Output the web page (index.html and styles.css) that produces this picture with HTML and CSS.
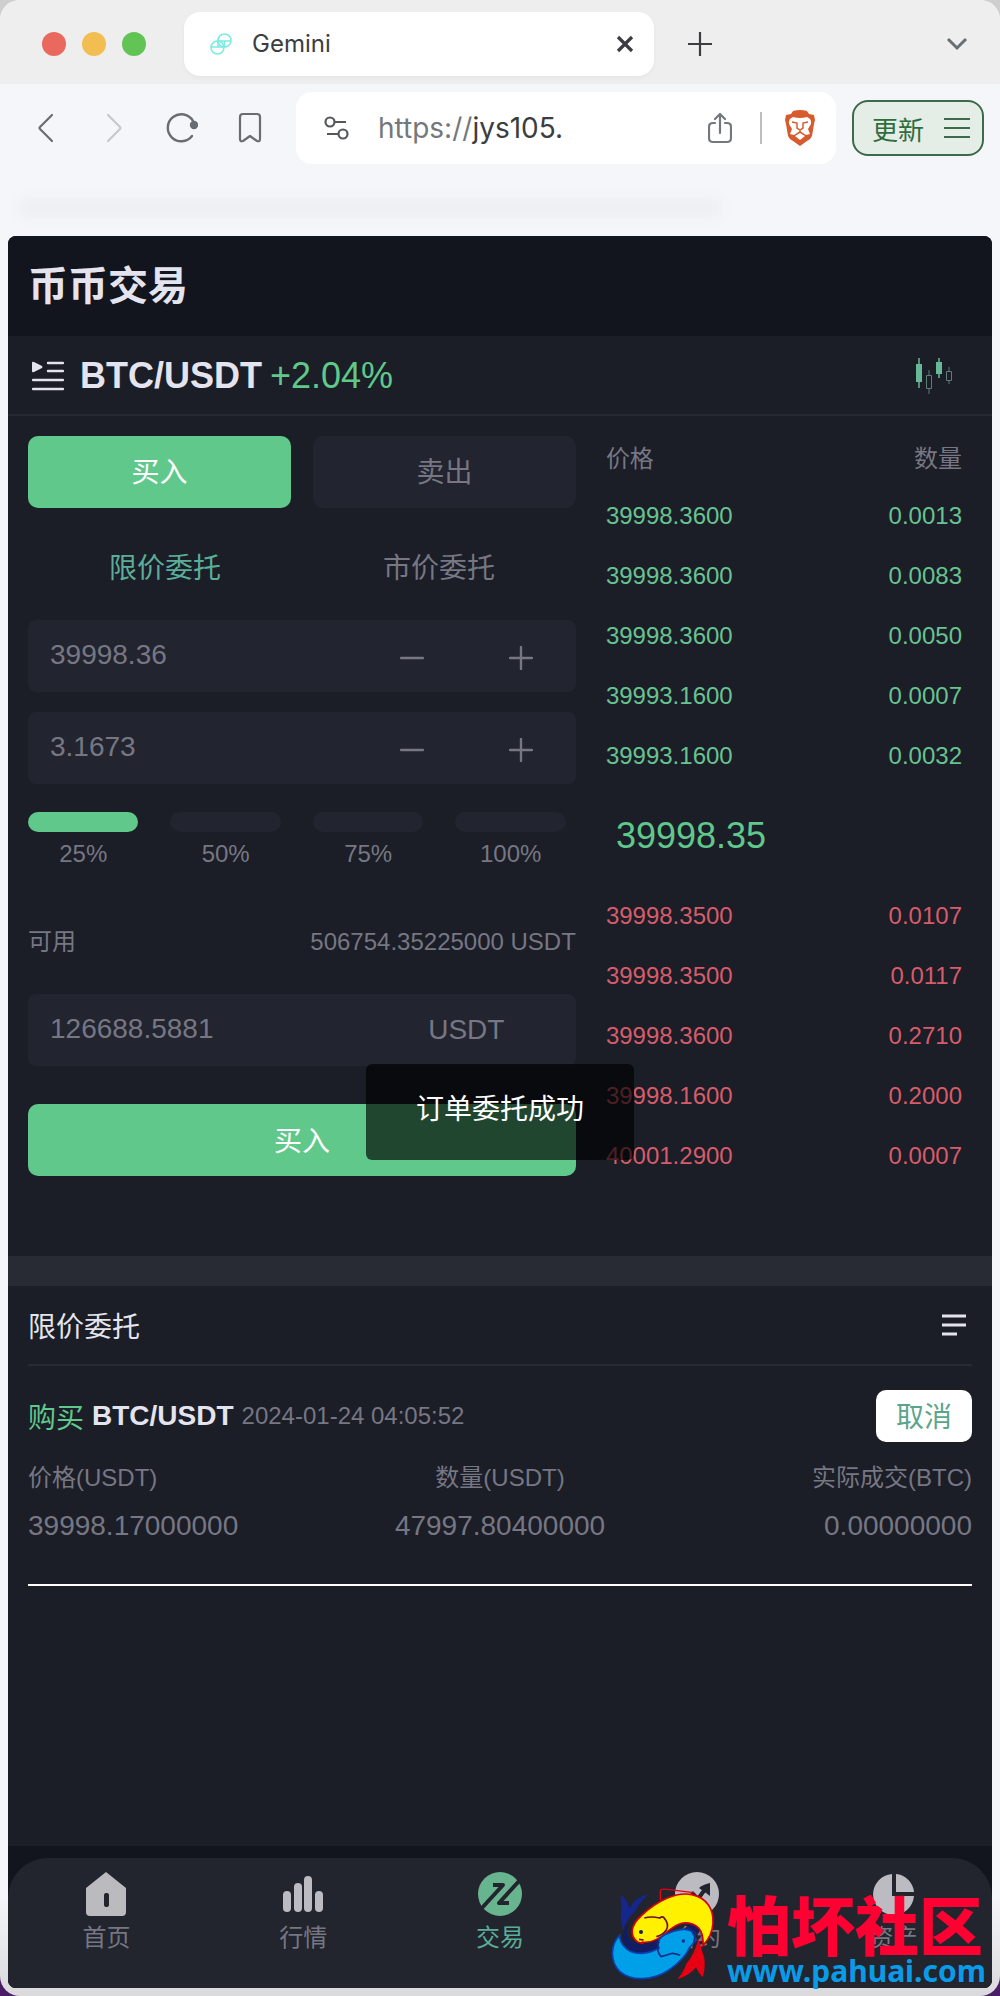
FILE: index.html
```html
<!DOCTYPE html>
<html lang="zh-CN">
<head>
<meta charset="utf-8">
<meta name="viewport" content="width=device-width, initial-scale=1">
<title>Gemini</title>
<link rel="stylesheet" href="styles.css">
</head>
<body>
<div class="window">
  <header class="tabbar">
    <div class="lights"><span class="light red"></span><span class="light yellow"></span><span class="light green"></span></div>
    <div class="tab">
      <svg class="favicon" viewBox="0 0 22 22" width="22" height="22" fill="none" stroke="#7cecdf" stroke-width="1.6"><circle cx="14.500" cy="7.500" r="6.500"/><circle cx="7.500" cy="14.500" r="6.500"/><path d="M1 14h13.500V8M21 8H8v6"/></svg>
      <span class="tab-title">Gemini</span>
      <button class="icon-btn" type="button" aria-label="关闭标签页"><svg viewBox="0 0 18 18" width="18" height="18" fill="none" stroke="#3b3d40" stroke-width="3.200"><path d="M2 2l14 14M16 2L2 16"/></svg></button>
    </div>
    <button class="icon-btn new-tab" type="button" aria-label="新标签页"><svg viewBox="0 0 24 24" width="24" height="24" fill="none" stroke="#3b3d40" stroke-width="2.200"><path d="M12 0v24M0 12h24"/></svg></button>
    <button class="icon-btn tab-list" type="button" aria-label="标签页列表"><svg viewBox="0 0 22 16" width="22" height="16" fill="none" stroke="#696e75" stroke-width="3"><path d="M2 3l9 9 9-9"/></svg></button>
  </header>

  <div class="toolbar">
    <div class="nav-buttons">
      <button class="icon-btn" type="button" aria-label="后退"><svg viewBox="0 0 32 32" width="32" height="32" fill="none" stroke="#696d72" stroke-width="2.200" stroke-linecap="round" stroke-linejoin="round"><path d="M22 3L10 15q-1 1 0 2l12 12"/></svg></button>
      <button class="icon-btn" type="button" aria-label="前进"><svg viewBox="0 0 32 32" width="32" height="32" fill="none" stroke="#c6c9cc" stroke-width="2.200" stroke-linecap="round" stroke-linejoin="round"><path d="M10 3l12 12q1 1 0 2L10 29"/></svg></button>
      <button class="icon-btn" type="button" aria-label="刷新"><svg viewBox="0 0 32 32" width="32" height="32" fill="none" stroke="#696d72" stroke-width="2.400" stroke-linecap="round"><path d="M27 9a13.500 13.500 0 1 0-1 15"/><circle cx="28" cy="13" r="3" fill="#696d72"/></svg></button>
      <button class="icon-btn" type="button" aria-label="书签"><svg viewBox="0 0 32 32" width="32" height="32" fill="none" stroke="#696d72" stroke-width="2.200" stroke-linejoin="round"><path d="M6 5q0-3 3-3h14q3 0 3 3v22q0 3-3 2l-7-5-7 5q-3 1-3-2z"/></svg></button>
    </div>
    <div class="address">
      <svg viewBox="0 0 26 24" width="26" height="24" fill="none" stroke="#55585c" stroke-width="2.200"><circle cx="6" cy="6" r="4.500"/><path d="M11 6h11M3 18h11"/><circle cx="19" cy="18" r="4.500"/></svg>
      <span class="url"><span class="scheme">https://</span>jys105.</span>
      <button class="icon-btn" type="button" aria-label="分享"><svg viewBox="0 0 24 32" width="24" height="32" fill="none" stroke="#74777b" stroke-width="2.200" stroke-linecap="round" stroke-linejoin="round"><path d="M7 11H5q-4 0-4 4v11q0 4 4 4h14q4 0 4-4V15q0-4-4-4h-2M12 21V2M7 7l5-5 5 5"/></svg></button>
      <span class="rule"></span>
      <button class="icon-btn" type="button" aria-label="防护"><svg viewBox="0 0 32 36" width="32" height="36"><path fill="#d85b2e" d="M9 1q7-2 14 0l2 3 5 1 1 5-1 4-2 12q-1 3-5 5l-7 5-7-5q-4-2-5-5L2 14l-1-4 1-5 5-1z"/><path fill="#fff" d="M9 7q7 2 14 0 5 2 4 7l-3 5 2 5-4 1-3-2-3-2-3 2-3 2-4-1 2-5-3-5q-1-5 4-7zM11 26l5-3 5 3-5 4z"/><path fill="none" stroke="#d85b2e" stroke-width="1.500" d="M8 12l5 1v5l3 2 3-2v-5l5-1M16 20v2"/></svg></button>
    </div>
    <button class="update" type="button">更新<svg viewBox="0 0 26 22" width="26" height="22" fill="none" stroke="#3c6b4a" stroke-width="2"><path d="M0 2h26M0 11h26M0 20h26"/></svg></button>
  </div>
  <div class="bookmarks" aria-hidden="true"><span class="smudge"></span></div>

  <main class="app">
    <h1 class="title">币币交易</h1>
    <div class="pair">
      <svg viewBox="0 0 32 30" width="32" height="30"><path fill="#e4e4ee" d="M0 2q0-2 2-1l8 4q1 1 0 2l-8 4q-2 1-2-1z"/><path stroke="#e4e4ee" stroke-width="2.400" stroke-linecap="round" d="M16 2h15M16 10h15M1 19h30M1 28h30"/></svg>
      <h2 class="pair-name">BTC/USDT</h2>
      <span class="change">+2.04%</span>
      <button class="icon-btn chart" type="button" aria-label="K线图"><svg viewBox="0 0 36 36" width="36" height="36"><path stroke="#67b896" stroke-width="1.500" d="M3 0v30M23 0v20"/><path fill="#67b896" d="M0 6h6v18H0zM20 4h6v12h-6z"/><path fill="none" stroke="#5d7d78" d="M13 12v5M10.500 17.500h5v13h-5zM13 31v5M33 9v4M30.500 13.500h5v9h-5zM33 23v3"/></svg></button>
    </div>

    <div class="trade">
      <form class="order-form">
        <div class="sides">
          <button class="side active" type="button">买入</button>
          <button class="side" type="button">卖出</button>
        </div>
        <div class="types">
          <button class="type active" type="button">限价委托</button>
          <button class="type" type="button">市价委托</button>
        </div>
        <div class="field">
          <input type="text" value="39998.36" aria-label="价格">
          <button class="icon-btn step" type="button" aria-label="减少价格"><svg viewBox="0 0 24 24" width="24" height="24" stroke="#767783" stroke-width="2.400" stroke-linecap="round"><path d="M1 12h22"/></svg></button>
          <button class="icon-btn step" type="button" aria-label="增加价格"><svg viewBox="0 0 24 24" width="24" height="24" stroke="#767783" stroke-width="2.400" stroke-linecap="round"><path d="M1 12h22M12 1v22"/></svg></button>
        </div>
        <div class="field">
          <input type="text" value="3.1673" aria-label="数量">
          <button class="icon-btn step" type="button" aria-label="减少数量"><svg viewBox="0 0 24 24" width="24" height="24" stroke="#767783" stroke-width="2.400" stroke-linecap="round"><path d="M1 12h22"/></svg></button>
          <button class="icon-btn step" type="button" aria-label="增加数量"><svg viewBox="0 0 24 24" width="24" height="24" stroke="#767783" stroke-width="2.400" stroke-linecap="round"><path d="M1 12h22M12 1v22"/></svg></button>
        </div>
        <div class="percents">
          <button class="percent active" type="button"><span class="bar"></span>25%</button>
          <button class="percent" type="button"><span class="bar"></span>50%</button>
          <button class="percent" type="button"><span class="bar"></span>75%</button>
          <button class="percent" type="button"><span class="bar"></span>100%</button>
        </div>
        <div class="available"><span>可用</span><span>506754.35225000 USDT</span></div>
        <div class="field total">
          <input type="text" value="126688.5881" aria-label="总额">
          <span class="unit">USDT</span>
        </div>
        <button class="submit" type="button">买入</button>
      </form>

      <table class="book">
        <thead><tr><th>价格</th><th>数量</th></tr></thead>
        <tbody class="up">
          <tr><td>39998.3600</td><td>0.0013</td></tr>
          <tr><td>39998.3600</td><td>0.0083</td></tr>
          <tr><td>39998.3600</td><td>0.0050</td></tr>
          <tr><td>39993.1600</td><td>0.0007</td></tr>
          <tr><td>39993.1600</td><td>0.0032</td></tr>
        </tbody>
        <tbody class="last"><tr><td colspan="2">39998.35</td></tr></tbody>
        <tbody class="down">
          <tr><td>39998.3500</td><td>0.0107</td></tr>
          <tr><td>39998.3500</td><td>0.0117</td></tr>
          <tr><td>39998.3600</td><td>0.2710</td></tr>
          <tr><td>39998.1600</td><td>0.2000</td></tr>
          <tr><td>40001.2900</td><td>0.0007</td></tr>
        </tbody>
      </table>
      <div class="toast" role="status">订单委托成功</div>
    </div>

    <section class="orders">
      <div class="orders-head">
        <h3>限价委托</h3>
        <button class="icon-btn" type="button" aria-label="全部委托"><svg viewBox="0 0 24 22" width="24" height="22" stroke="#e4e4ee" stroke-width="3"><path d="M0 2h24M0 11h24M0 20h15"/></svg></button>
      </div>
      <article class="order">
        <div class="order-top">
          <span class="buy">购买</span><strong>BTC/USDT</strong><time>2024-01-24 04:05:52</time>
          <button class="cancel" type="button">取消</button>
        </div>
        <dl class="facts">
          <div><dt>价格(USDT)</dt><dd>39998.17000000</dd></div>
          <div><dt>数量(USDT)</dt><dd>47997.80400000</dd></div>
          <div><dt>实际成交(BTC)</dt><dd>0.00000000</dd></div>
        </dl>
      </article>
    </section>

    <div class="bottom">
      <nav class="menu">
        <a href="#home"><svg viewBox="0 0 44 44" width="44" height="44"><path fill="#bbbbbf" d="M22 0l20 16v24q0 4-4 4H6q-4 0-4-4V16z"/><rect x="20" y="21" width="5" height="14" rx="2" fill="#22242e"/></svg>首页</a>
        <a href="#market"><svg viewBox="0 0 44 44" width="44" height="44" fill="#bbbbc1"><rect x="2" y="19" width="8" height="21" rx="4"/><rect x="13" y="11" width="8" height="29" rx="4"/><rect x="23" y="4" width="8" height="36" rx="4"/><rect x="34" y="19" width="8" height="21" rx="4"/></svg>行情</a>
        <a href="#trade" class="active"><svg viewBox="0 0 44 44" width="44" height="44"><circle cx="22" cy="22" r="22" fill="#68b48f"/><path fill="none" stroke="#22242e" stroke-width="4" stroke-linejoin="round" d="M15 13h10L3 37M42 8L21 31h10"/></svg>交易</a>
        <a href="#contract"><svg viewBox="0 0 44 44" width="44" height="44"><circle cx="22" cy="22" r="22" fill="#bbbbc1"/><path fill="none" stroke="#22242e" stroke-width="4" d="M8 33l10-11 5 5 8-11"/><path fill="#22242e" d="M35 11v13l-4-3-7-5q3-3 11-5z"/></svg>合约</a>
        <a href="#assets"><svg viewBox="0 0 44 44" width="44" height="44" fill="#bbbbc1"><path d="M20 2v22h22A20.500 20.500 0 1 1 20 2zM24 2a20 20 0 0 1 18 18H24z"/></svg>资产</a>
      </nav>
    </div>
  </main>

  <div class="brand">
    <svg viewBox="0 0 360 324" width="120" height="108">
      <path fill="#15268c" d="M41 44q20 12 26 42 16-34 56-44-28 30-40 54-26 22-34 54-12-34-6-60z"/>
      <path fill="#e60012" d="M274 178l18 56q4 32-5 58-12-12-20-30-18 24-56 36 20-24 28-48 22-24 35-72z"/>
      <path fill="none" stroke="#e60012" stroke-width="4" d="M160 60V32q2-6 20-4l80 10"/>
      <path fill="#111c63" d="M74 118q-24 28-8 60l36 14 58-12 104-50 14 12-38 74-70 20-90-10-28-34q-14-42 22-74z"/>
      <path fill="#fff100" stroke="#d7000f" stroke-width="5" d="M104 186q12 8-12 0c-26-18-20-52 10-78C150 62 210 34 254 44c48 10 66 46 64 86-2 28-14 50-30 66 2-34-8-56-32-64-28-10-50 2-76 24-24 22-48 34-76 30z"/>
      <path fill="none" stroke="#6d1020" stroke-width="5" d="M112 114q20-6 46 0 8-6 12-2 18 20 8 38-12 16-30 20M96 178l14 2"/>
      <circle cx="102" cy="156" r="6" fill="#172060"/>
      <path fill="#00a0e9" stroke="#0c3faf" stroke-width="5" d="M38 166c-28 28-30 78 0 108 36 32 100 28 148-4 34-24 52-44 62-68l20-22-14-26c-16-10-46-6-76 8-28 14-28 32-22 42-34 20-76 22-98 2-14-12-20-24-20-40z"/>
      <path fill="none" stroke="#142b83" stroke-width="5" d="M156 184q-10 28 6 46 18-4 34-10 8 0 24 6M240 142l26 16-6 30"/>
      <circle cx="229" cy="183" r="5" fill="#142b83"/>
    </svg>
    <div class="brand-text"><span class="brand-name">怕坏社区</span><span class="brand-url">www.pahuai.com</span></div>
  </div>
</div>
</body>
</html>
```
FILE: styles.css
```css
* { box-sizing: border-box; }

body {
  margin: 0;
  background: linear-gradient(#cfcfcf 50%, #4a1d66 50%);
  font-family: "Liberation Sans", "Noto Sans CJK SC", sans-serif;
}

h1, h2, h3, dl, dd { margin: 0; }

button {
  border: 0;
  padding: 0;
  background: none;
  color: inherit;
  font: inherit;
  cursor: pointer;
}

svg { display: block; flex: none; }

.icon-btn { display: flex; align-items: center; justify-content: center; }

/* Browser window */
.window {
  position: relative;
  display: flex;
  flex-direction: column;
  min-height: 100vh;
  padding-bottom: 8px;
  background: linear-gradient(#f5f6f9 95%, #dadadc);
  border-radius: 20px;
  overflow: hidden;
}

.tabbar {
  display: flex;
  align-items: center;
  height: 84px;
  padding: 4px 32px 0 42px;
  background: #eeeeee;
}

.lights { display: flex; gap: 16px; width: 142px; }
.light { width: 24px; height: 24px; border-radius: 50%; }
.red { background: #e9695f; }
.yellow { background: #f2be51; }
.green { background: #61c454; }

.tab {
  flex: 0 1 470px;
  display: flex;
  align-items: center;
  height: 64px;
  padding: 0 20px 0 26px;
  border-radius: 16px;
  background: #fff;
  box-shadow: 0 2px 4px rgba(0, 0, 0, .04);
}

.tab-title {
  flex: 1;
  margin-left: 20px;
  color: #3b3d40;
  font: 24px/32px Inter, sans-serif;
}

.new-tab { margin-left: 34px; }
.tab-list { margin-left: auto; }

.toolbar {
  display: flex;
  align-items: center;
  height: 88px;
  padding: 0 16px 0 30px;
}

.nav-buttons { display: flex; gap: 36px; margin-right: 30px; }

.address {
  flex: 1;
  display: flex;
  align-items: center;
  height: 72px;
  padding: 0 20px 0 28px;
  border-radius: 16px;
  background: #fff;
}

.url {
  flex: 1;
  margin-left: 28px;
  color: #3b3d40;
  font: 28px/36px Inter, sans-serif;
}

.scheme { color: #74777b; }

.rule { width: 2px; height: 32px; margin: 0 22px 0 28px; background: #bbbdc0; }

.update {
  display: flex;
  align-items: center;
  gap: 20px;
  height: 56px;
  margin-left: 16px;
  padding: 0 12px 0 18px;
  border: 2px solid #3c6b4a;
  border-radius: 16px;
  background: #e5ede7;
  color: #2f6e3c;
  font-size: 26px;
}

.bookmarks { height: 64px; padding: 28px 28% 0 20px; }
.smudge { display: block; height: 16px; background: #eceef1; filter: blur(6px); }

/* Trading page */
.app {
  flex: 1;
  display: flex;
  flex-direction: column;
  margin: 0 8px;
  border-radius: 8px;
  overflow: hidden;
  background: #1b1d27;
  color: #767783;
}

.title {
  padding: 20px;
  background: #12141e;
  color: #e4e4ee;
  font-size: 40px;
  line-height: 60px;
}

.pair {
  display: flex;
  align-items: center;
  height: 80px;
  padding: 2px 40px 0 24px;
  border-bottom: 2px solid #262833;
  font-size: 36px;
}

.pair-name { margin: 0 8px 0 16px; color: #e4e4ee; font-size: 36px; }
.change { color: #5fc88a; }
.chart { margin-left: auto; }

.trade {
  position: relative;
  display: grid;
  grid-template-columns: 20fr 13fr;
  align-items: start;
  gap: 30px;
  padding: 0 30px 70px 20px;
}

.order-form { padding-top: 20px; font-size: 28px; }

.sides { display: grid; grid-template-columns: 1fr 1fr; gap: 22px; }

.side, .submit { height: 72px; border-radius: 10px; background: #22242f; }
.side { padding-bottom: 4px; }
.side.active, .submit { background: #5fc88a; color: #fff; }

.types { display: grid; grid-template-columns: 1fr 1fr; margin: 22px 0 18px; }
.type { height: 72px; }
.type.active { color: #5aae98; }

.field {
  display: grid;
  grid-template-columns: 3fr 1fr 1fr;
  align-items: center;
  height: 72px;
  margin-bottom: 20px;
  border-radius: 8px;
  background: #22242f;
}

.field input {
  width: 100%;
  min-width: 0;
  border: 0;
  padding: 0 0 2px 22px;
  background: none;
  color: inherit;
  font: inherit;
  outline: 0;
}

.step { padding-top: 4px; }

.percents {
  display: grid;
  grid-template-columns: repeat(4, 1fr);
  gap: 32px;
  margin: 28px 10px 0 0;
}

.percent { font-size: 24px; line-height: 36px; }
.bar { display: block; height: 20px; margin-bottom: 4px; border-radius: 10px; background: #22242f; }
.percent.active .bar { background: #5fc88a; }

.available {
  display: flex;
  justify-content: space-between;
  margin: 52px 0 34px;
  font-size: 24px;
  line-height: 36px;
}

.total { grid-template-columns: 3fr 2fr; margin-bottom: 38px; }
.unit { text-align: center; }
.submit { display: block; width: 100%; padding-bottom: 2px; }

.book {
  width: 100%;
  margin-top: 10px;
  border-collapse: collapse;
  font-size: 24px;
}

.book th, .book td { height: 60px; padding: 0; font-weight: 400; text-align: left; }
.book th:last-child, .book td:last-child { text-align: right; }
.up { color: #67c390; }
.down { color: #d65c6a; }

.book .last td {
  height: 100px;
  padding-left: 10px;
  color: #5fc88a;
  font-size: 36px;
  text-align: left;
}

.toast {
  position: absolute;
  bottom: 96px;
  left: 50%;
  padding: 22px 50px 26px;
  border-radius: 6px;
  background: rgba(0, 0, 0, .65);
  color: #fff;
  font-size: 28px;
  line-height: 48px;
  white-space: nowrap;
  transform: translateX(-50%);
}

.orders { flex: 1; padding: 0 20px; border-top: 30px solid #282a34; }

.orders-head {
  display: flex;
  align-items: center;
  justify-content: space-between;
  height: 80px;
  padding-right: 6px;
  border-bottom: 2px solid #282a34;
  color: #e4e4ee;
}

.orders-head h3 { font-size: 28px; font-weight: 400; }

.order { padding: 24px 0 38px; border-bottom: 2px solid #fff; font-size: 28px; }
.order-top { display: flex; align-items: center; gap: 8px; }
.order-top strong { color: #e4e4ee; }
.order-top time { font-size: 24px; }
.buy { color: #5fc88a; }

.cancel {
  width: 96px;
  height: 52px;
  margin-left: auto;
  padding-bottom: 2px;
  border-radius: 10px;
  background: #fff;
  color: #5aa58c;
}

.facts { display: grid; grid-template-columns: 1fr 1fr 1fr; margin-top: 18px; text-align: center; }
.facts div:first-child { text-align: left; }
.facts div:last-child { text-align: right; }
.facts dt { font-size: 24px; line-height: 36px; }
.facts dd { margin-top: 10px; line-height: 40px; }

.bottom { padding-top: 12px; background: #12141e; }

.menu {
  display: grid;
  grid-template-columns: repeat(5, 1fr);
  height: 130px;
  padding-top: 14px;
  border-radius: 40px 40px 0 0;
  background: #22242e;
}

.menu a {
  display: flex;
  flex-direction: column;
  align-items: center;
  gap: 4px;
  color: #767783;
  font-size: 24px;
  line-height: 36px;
  text-decoration: none;
}

.menu a.active { color: #5aae98; }

/* Site badge laid over the menu */
.brand {
  position: absolute;
  right: 14px;
  bottom: 8px;
  display: flex;
  align-items: flex-end;
  pointer-events: none;
}

.brand-text { display: flex; flex-direction: column; }
.brand-name { color: #ff0033; font: 900 64px/64px "Noto Sans CJK SC", sans-serif; }
.brand-url { color: #0a9be8; font: 700 30px/34px "Noto Sans", sans-serif; }
```
